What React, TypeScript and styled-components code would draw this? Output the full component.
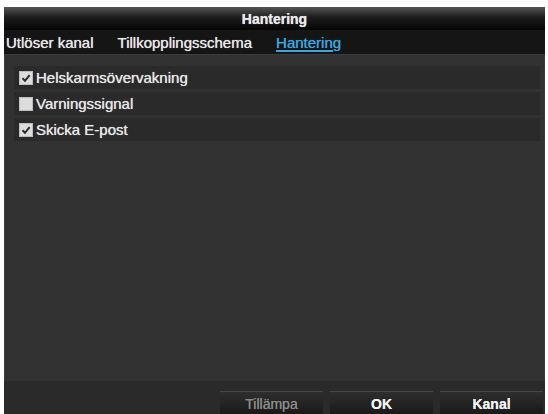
import React, { useState } from 'react';
import styled, { createGlobalStyle } from 'styled-components';

const GlobalStyle = createGlobalStyle`
  html, body {
    margin: 0;
    padding: 0;
    background: #ffffff;
    height: 414px;
    overflow: hidden;
  }
  body {
    font-family: "Liberation Sans", Arial, sans-serif;
  }
`;

const Window = styled.div`
  display: flex;
  flex-direction: column;
  width: 541px;
  height: 410px;
  margin: 7px 0 0 4px;
  background: #1a1a1a;
  color: #e6e6e6;
  font-size: 15px;
  text-shadow: 0 0 0.7px currentColor;
`;

const TitleBar = styled.div`
  display: flex;
  align-items: center;
  justify-content: center;
  height: 23px;
  background: linear-gradient(#555 0%, #1c1c1c 45%, #050505 100%);
  font-weight: bold;
  font-size: 14px;
  color: #e8e8e8;
`;

const TabBar = styled.div`
  display: flex;
  align-items: center;
  gap: 24px;
  height: 24px;
  padding: 0 0 0 2px;
  background: #151515;
`;

const Tab = styled.span<{ $active?: boolean }>`
  color: ${p => (p.$active ? '#3fa6dc' : '#e8e8e8')};
  text-decoration: ${p => (p.$active ? 'underline' : 'none')};
  text-decoration-thickness: 2px;
  text-underline-offset: 2px;
  cursor: pointer;
  line-height: 18px;
  padding-top: 2px;
`;

const Panel = styled.div`
  flex: 1;
  display: flex;
  flex-direction: column;
  gap: 3px;
  padding: 11px 4px 0 9px;
  background: #323232;
  border-top: 1px solid #3c3c3c;
  border-left: 1px solid #3a3a3a;
  border-right: 1px solid #3a3a3a;
`;

const Row = styled.label`
  display: flex;
  align-items: center;
  gap: 3px;
  height: 23px;
  padding-left: 5px;
  background: #2a2a2a;
  cursor: pointer;
`;

const Box = styled.span<{ $checked: boolean }>`
  display: flex;
  align-items: center;
  justify-content: center;
  width: 12px;
  height: 12px;
  background: #dcdcdc;
  border: 1px solid #bdbdbd;
`;

const Footer = styled.div`
  display: flex;
  justify-content: flex-end;
  gap: 7px;
  height: 36px;
  padding: 10px 2px 0 0;
  background: #2a2a2a;
  box-sizing: border-box;
`;

const Button = styled.button<{ $disabled?: boolean }>`
  width: 103px;
  height: 28px;
  border: none;
  border-top: 1px solid #454545;
  background: linear-gradient(#2e2e2e, #151515);
  color: ${p => (p.$disabled ? '#8c8c8c' : '#f2f2f2')};
  font-family: "Liberation Sans", Arial, sans-serif;
  font-size: 14px;
  font-weight: ${p => (p.$disabled ? 'normal' : 'bold')};
  text-shadow: 0 0 0.6px currentColor;
  padding: 0 0 3px;
`;

const Check = () => (
  <svg width="10" height="10" viewBox="0 0 10 10">
    <path d="M1.5 5.2 L4 7.8 L8.6 2.2" fill="none" stroke="#2c2c2c" strokeWidth="2" />
  </svg>
);

const items = [
  { label: 'Helskarmsövervakning', checked: true },
  { label: 'Varningssignal', checked: false },
  { label: 'Skicka E-post', checked: true },
];

export default function App(): React.ReactElement {
  const [state, setState] = useState(items.map(i => i.checked));

  const toggle = (idx: number): void => {
    setState(s => s.map((v, i) => (i === idx ? !v : v)));
  };

  return (
    <>
      <GlobalStyle />
      <Window>
        <TitleBar>Hantering</TitleBar>
        <TabBar>
          <Tab>Utlöser kanal</Tab>
          <Tab>Tillkopplingsschema</Tab>
          <Tab $active>Hantering</Tab>
        </TabBar>
        <Panel>
          {items.map((item, idx) => (
            <Row key={item.label} onClick={() => toggle(idx)}>
              <Box $checked={state[idx]}>{state[idx] && <Check />}</Box>
              {item.label}
            </Row>
          ))}
        </Panel>
        <Footer>
          <Button $disabled>Tillämpa</Button>
          <Button>OK</Button>
          <Button>Kanal</Button>
        </Footer>
      </Window>
    </>
  );
}
